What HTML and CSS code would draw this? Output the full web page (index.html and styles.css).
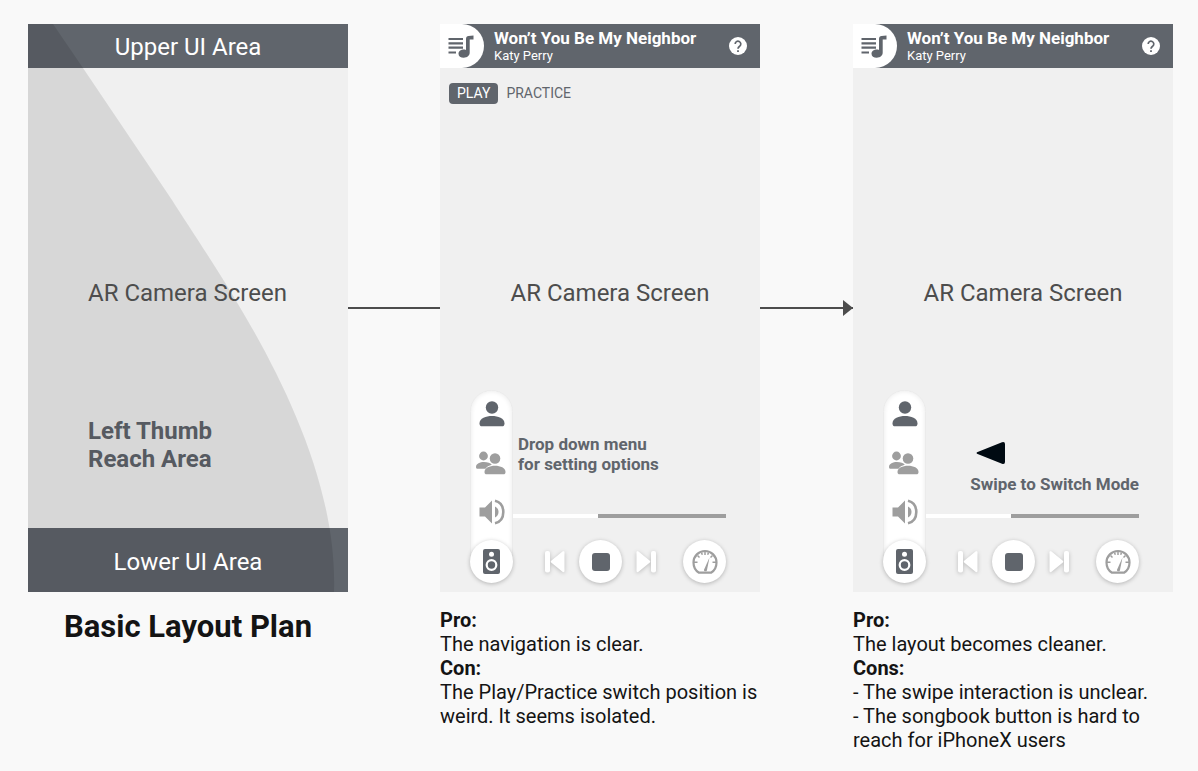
FILE: index.html
```html
<!DOCTYPE html>
<html lang="en">
<head>
<meta charset="utf-8">
<meta name="viewport" content="width=device-width, initial-scale=1">
<title>Basic Layout Plan</title>
<link rel="stylesheet" href="styles.css">
</head>
<body>
<svg class="sprite" aria-hidden="true">
  <symbol id="i-book" viewBox="0 0 26 24">
    <path d="M.5 5H15M.5 9.300H15M.5 13.600H15M.5 18.500H8" fill="none" stroke="currentColor" stroke-width="2.200"/>
    <path d="M25.500 1.500V5.500H21.700V18.500C21.700 21.800 19 23.700 15.800 23.700S10.500 22.200 10.500 19.700 13 15.600 15.800 15.600C16.600 15.600 17.300 15.700 18 16V5C18 3 19 2.200 20.500 2Z" fill="currentColor"/>
  </symbol>
  <symbol id="i-help" viewBox="0 0 18 18">
    <circle cx="9" cy="9" r="9" fill="#fff"/>
    <path d="M6.200 7A2.800 2.800 0 1 1 10.800 9.100C9.700 9.900 9 10.300 9 11.700" fill="none" stroke="#60656c" stroke-width="1.700"/>
    <path d="M8.100 13.200h1.800v1.800H8.100z" fill="#60656c"/>
  </symbol>
  <symbol id="i-person" viewBox="0 0 26 26">
    <circle cx="13" cy="6.500" r="6.200"/>
    <path d="M.5 22.500C.5 17 7 15 13 15S25.500 17 25.500 22.500C25.500 24.500 24.500 25.300 23 25.300H3C1.500 25.300.5 24.500.5 22.500Z"/>
  </symbol>
  <symbol id="i-people" viewBox="1.5 0 30 26">
    <circle cx="8" cy="6" r="4.400"/>
    <circle cx="19.500" cy="8.500" r="5.300"/>
    <path d="M.5 17C.5 13.500 4.500 12 8.500 12C12 12 15 13 16.300 14.800C13.500 15.500 11 16.800 10 18.800H2C1 18.800.5 18 .5 17Z"/>
    <path d="M9 22C9 17.800 14 15.700 19.500 15.700S30 17.800 30 22C30 23.700 29.200 24.300 28 24.300H11C9.800 24.300 9 23.700 9 22Z"/>
  </symbol>
  <symbol id="i-volume" viewBox="0 0 26 26">
    <path d="M.5 8.500H6L13 1.500V24.500L6 17.500H.5Z"/>
    <path d="M16 7.500C18.300 8.600 19.500 10.500 19.500 13S18.300 17.400 16 18.500Z"/>
    <path d="M16 1.700C21.500 3 24.300 7.500 24.300 13S21.500 23 16 24.300" fill="none" stroke="currentColor" stroke-width="2.600"/>
  </symbol>
  <symbol id="i-speaker" viewBox="0 0 17 25">
    <rect width="17" height="25" rx="2"/>
    <circle cx="8.500" cy="5.300" r="2.500" fill="#fff"/>
    <circle cx="8.500" cy="16" r="4.800" fill="none" stroke="#fff" stroke-width="2.200"/>
  </symbol>
  <symbol id="i-prev" viewBox="0 0 24 24">
    <rect x="4" y="1" width="5" height="21.500" rx="2"/>
    <path d="M10.500 10.500 21.500 1.600C22.500.8 23.500 1.200 23.500 2.500V20.800C23.500 22.200 22.500 22.500 21.500 21.700L10.500 12.800C9.500 12 9.500 11.300 10.500 10.500Z"/>
  </symbol>
  <symbol id="i-next" viewBox="0 0 24 24">
    <rect x="15" y="1" width="5" height="21.500" rx="2"/>
    <path d="M13.500 10.500 2.500 1.600C1.500.8.5 1.200.5 2.500V20.800C.5 22.200 1.500 22.500 2.500 21.700L13.500 12.800C14.500 12 14.500 11.300 13.500 10.500Z"/>
  </symbol>
  <symbol id="i-stop" viewBox="0 0 18 18"><rect width="18" height="18" rx="3"/></symbol>
  <symbol id="i-gauge" viewBox="0 0 26 26">
    <path d="M7 23.700C3.500 21.700 1.500 18 1.500 13.500A11.500 11.500 0 0 1 24.500 13.500C24.500 18 22.500 21.700 19 23.700Z" fill="none" stroke="currentColor" stroke-width="2.200"/>
    <path d="M13 3v3M9.500 3.500l.8 2.300M16.500 3.500l-.8 2.300M5.500 6.500l2 2M20.500 6.500l-2 2M2 13.200h3.500M24 13.200h-3.500" stroke="currentColor" stroke-width="1.500"/>
    <path d="M17.500 8.500 14.900 21.500C14.300 22.900 11.700 22.600 12 20.700Z"/>
  </symbol>
</svg>

<main class="board">
  <section class="phone plan" aria-label="Basic layout">
    <header class="area-bar area-bar-top"><span class="area-name">Upper UI Area</span></header>
    <div class="plan-body">
      <p class="screen-label area-name">AR Camera Screen</p>
      <p class="reach-label">Left Thumb<br>Reach Area</p>
    </div>
    <footer class="area-bar area-bar-bottom"><span class="area-name">Lower UI Area</span></footer>
    <svg class="reach" viewBox="0 0 320 568" preserveAspectRatio="none" aria-hidden="true">
      <path d="M0 0H25L55 44 144 176C196 258 311 416 306 568H0Z"/>
    </svg>
  </section>

  <div class="link"></div>

  <section class="phone" aria-label="Option one">
    <header class="song-bar">
      <button class="book" aria-label="Songbook"><svg><use href="#i-book"/></svg></button>
      <div class="song"><strong class="song-title">Won’t You Be My Neighbor</strong><span class="song-artist">Katy Perry</span></div>
      <button class="help" aria-label="Help"><svg><use href="#i-help"/></svg></button>
    </header>
    <nav class="modes">
      <button class="mode mode-on">PLAY</button><button class="mode">PRACTICE</button>
    </nav>
    <p class="screen-label app-label">AR Camera Screen</p>
    <div class="dock">
      <div class="dock-top">
        <div class="menu">
          <button class="menu-item menu-on" aria-label="Solo"><svg class="ic"><use href="#i-person"/></svg></button>
          <button class="menu-item" aria-label="Group"><svg class="ic ic-wide"><use href="#i-people"/></svg></button>
          <button class="menu-item" aria-label="Volume"><svg class="ic"><use href="#i-volume"/></svg></button>
        </div>
        <div class="dock-side">
          <p class="hint">Drop down menu<br>for setting options</p>
          <input class="slider" type="range" min="0" max="100" value="40" aria-label="Volume level">
        </div>
      </div>
      <div class="controls">
        <button class="round" aria-label="Sound settings"><svg class="ic-speaker"><use href="#i-speaker"/></svg></button>
        <div class="transport">
          <button class="skip" aria-label="Previous"><svg><use href="#i-prev"/></svg></button>
          <button class="round" aria-label="Stop"><svg class="ic-stop"><use href="#i-stop"/></svg></button>
          <button class="skip" aria-label="Next"><svg><use href="#i-next"/></svg></button>
        </div>
        <button class="round" aria-label="Tempo"><svg class="ic ic-gauge"><use href="#i-gauge"/></svg></button>
      </div>
    </div>
  </section>

  <div class="link link-arrow"></div>

  <section class="phone" aria-label="Option two">
    <header class="song-bar">
      <button class="book" aria-label="Songbook"><svg><use href="#i-book"/></svg></button>
      <div class="song"><strong class="song-title">Won’t You Be My Neighbor</strong><span class="song-artist">Katy Perry</span></div>
      <button class="help" aria-label="Help"><svg><use href="#i-help"/></svg></button>
    </header>
    <div class="modes"></div>
    <p class="screen-label app-label">AR Camera Screen</p>
    <div class="dock">
      <div class="dock-top">
        <div class="menu">
          <button class="menu-item menu-on" aria-label="Solo"><svg class="ic"><use href="#i-person"/></svg></button>
          <button class="menu-item" aria-label="Group"><svg class="ic ic-wide"><use href="#i-people"/></svg></button>
          <button class="menu-item" aria-label="Volume"><svg class="ic"><use href="#i-volume"/></svg></button>
        </div>
        <div class="dock-side dock-side-swipe">
          <div class="swipe">
            <svg class="swipe-arrow" viewBox="0 0 30 24" aria-hidden="true"><path d="M1 11.200 26 1.300Q29 .5 29 3V21Q29 23.500 26 22.700L1 12.800Q0 12 1 11.200Z"/></svg>
            <p class="hint">Swipe to Switch Mode</p>
          </div>
          <input class="slider" type="range" min="0" max="100" value="40" aria-label="Volume level">
        </div>
      </div>
      <div class="controls">
        <button class="round" aria-label="Sound settings"><svg class="ic-speaker"><use href="#i-speaker"/></svg></button>
        <div class="transport">
          <button class="skip" aria-label="Previous"><svg><use href="#i-prev"/></svg></button>
          <button class="round" aria-label="Stop"><svg class="ic-stop"><use href="#i-stop"/></svg></button>
          <button class="skip" aria-label="Next"><svg><use href="#i-next"/></svg></button>
        </div>
        <button class="round" aria-label="Tempo"><svg class="ic ic-gauge"><use href="#i-gauge"/></svg></button>
      </div>
    </div>
  </section>

  <h1 class="plan-title">Basic Layout Plan</h1>
  <div class="notes notes-one">
    <h2>Pro:</h2>
    <p>The navigation is clear.</p>
    <h2>Con:</h2>
    <p>The Play/Practice switch position is weird. It seems isolated.</p>
  </div>
  <div class="notes notes-two">
    <h2>Pro:</h2>
    <p>The layout becomes cleaner.</p>
    <h2>Cons:</h2>
    <p>- The swipe interaction is unclear.</p>
    <p>- The songbook button is hard to reach for iPhoneX users</p>
  </div>
</main>
</body>
</html>
```
FILE: styles.css
```css
* { box-sizing: border-box; }

body {
  margin: 0;
  background: #f9f9f9;
  color: #141414;
  font-family: Roboto, "Liberation Sans", sans-serif;
}

p, h1, h2 { margin: 0; }

button {
  margin: 0;
  padding: 0;
  border: 0;
  background: none;
  color: inherit;
  font: inherit;
}

svg { display: block; fill: currentColor; overflow: visible; }
symbol { overflow: visible; }
.sprite { position: absolute; width: 0; height: 0; }

.board {
  display: grid;
  grid-template-columns: 320fr 92fr 320fr 93fr 320fr;
  row-gap: 16px;
  padding: 24px 25px 16px 28px;
}

.phone {
  position: relative;
  display: flex;
  flex-direction: column;
  min-width: 0;
  aspect-ratio: 40 / 71;
  background: #f0f0f0;
}

/* Layout plan */
.area-bar {
  display: flex;
  align-items: center;
  justify-content: center;
  background: #60656c;
  color: #fff;
  font-size: 24px;
  line-height: 28px;
}
.area-bar-top { height: 44px; padding-top: 2px; }
.area-bar-bottom { height: 64px; padding-top: 4px; }
.area-name { position: relative; z-index: 1; }
.plan-body { flex: 1; padding: 211px 0 0 60px; }
.screen-label { color: #4d4d4d; font-size: 24px; line-height: 28px; }
.reach-label {
  margin-top: 110px;
  color: #60656c;
  font-size: 24px;
  font-weight: 700;
  line-height: 28px;
}
.reach {
  position: absolute;
  inset: 0;
  width: 100%;
  height: 100%;
  fill: rgba(0, 0, 0, 0.1);
}

/* Connectors */
.link { align-self: center; height: 2px; background: #4d4d4d; }
.link-arrow { position: relative; }
.link-arrow::after {
  content: "";
  position: absolute;
  right: 0;
  top: -7px;
  border: 8px solid transparent;
  border-left: 10px solid #4d4d4d;
  border-right: 0;
}

/* App header */
.song-bar {
  display: flex;
  align-items: center;
  height: 44px;
  padding-right: 13px;
  background: #60656c;
  color: #fff;
}
.book {
  display: flex;
  align-items: center;
  width: 44px;
  height: 44px;
  padding-left: 8px;
  border-radius: 0 22px 22px 0;
  background: #fff;
  color: #60656c;
}
.book svg { width: 26px; height: 24px; }
.song { display: flex; flex: 1; flex-direction: column; padding-left: 10px; }
.song-title { font-size: 17px; line-height: 20px; }
.song-artist { font-size: 13px; line-height: 16px; }
.help svg { width: 18px; height: 18px; }

.modes { display: flex; align-items: flex-start; height: 44px; padding: 15px 9px 0; }
.mode {
  height: 21px;
  padding: 0 8px;
  border-radius: 4px;
  color: #60656c;
  font-size: 14px;
  line-height: 21px;
}
.mode-on { background: #60656c; color: #fff; }
.app-label { padding: 167px 0 0 20px; text-align: center; }

/* Dock */
.dock { margin-top: auto; padding: 0 34px 9px 30px; }
.dock-top { display: flex; }
.menu {
  display: flex;
  flex-direction: column;
  align-items: center;
  gap: 23px;
  width: 43px;
  height: 172px;
  padding-top: 10px;
  border: 1px solid #ebebeb;
  border-radius: 22px 22px 0 0;
  background: #fff;
  color: #9e9e9e;
  box-shadow: inset 0 0 5px rgba(0, 0, 0, 0.09);
}
.menu-on { color: #60656c; }
.ic { width: 26px; height: 26px; }
.ic-wide { width: 30px; }
.dock-side {
  display: flex;
  flex: 1;
  flex-direction: column;
  justify-content: flex-end;
  gap: 32px;
  min-width: 0;
  padding-bottom: 36px;
}
.dock-side-swipe { gap: 12px; }
.hint { padding-left: 5px; color: #60656c; font-size: 17px; font-weight: 700; line-height: 20px; }
.swipe { align-self: flex-end; }
.swipe .hint { padding-left: 0; white-space: nowrap; }
.swipe-arrow { width: 30px; height: 24px; margin: 0 0 9px 6px; fill: #000a12; }

.slider { appearance: none; width: 100%; height: 20px; margin: 0; background: none; }
.slider::-webkit-slider-runnable-track {
  height: 4px;
  background: linear-gradient(to right, #fff 40%, #9e9e9e 40%);
}
.slider::-webkit-slider-thumb { appearance: none; width: 1px; height: 4px; background: none; }

.controls {
  position: relative;
  display: flex;
  align-items: center;
  justify-content: space-between;
  margin-top: -22px;
}
.round {
  display: flex;
  align-items: center;
  justify-content: center;
  width: 43px;
  height: 43px;
  border-radius: 50%;
  background: #fff;
  color: #60656c;
  box-shadow: 0 1px 4px rgba(0, 0, 0, 0.25);
}
.transport { display: flex; align-items: center; gap: 14px; padding-left: 5px; }
.skip { color: #fff; filter: drop-shadow(0 1px 2px rgba(0, 0, 0, 0.22)); }
.skip svg { width: 24px; height: 24px; }
.ic-speaker { width: 17px; height: 25px; }
.ic-stop { width: 18px; height: 18px; }
.ic-gauge { color: #9e9e9e; }

/* Captions */
.plan-title { grid-column: 1; font-size: 31px; line-height: 38px; text-align: center; }
.notes { font-size: 20px; line-height: 24px; }
.notes h2 { font-size: 20px; line-height: 24px; }
.notes-one { grid-column: 3; }
.notes-two { grid-column: 5; }
```
